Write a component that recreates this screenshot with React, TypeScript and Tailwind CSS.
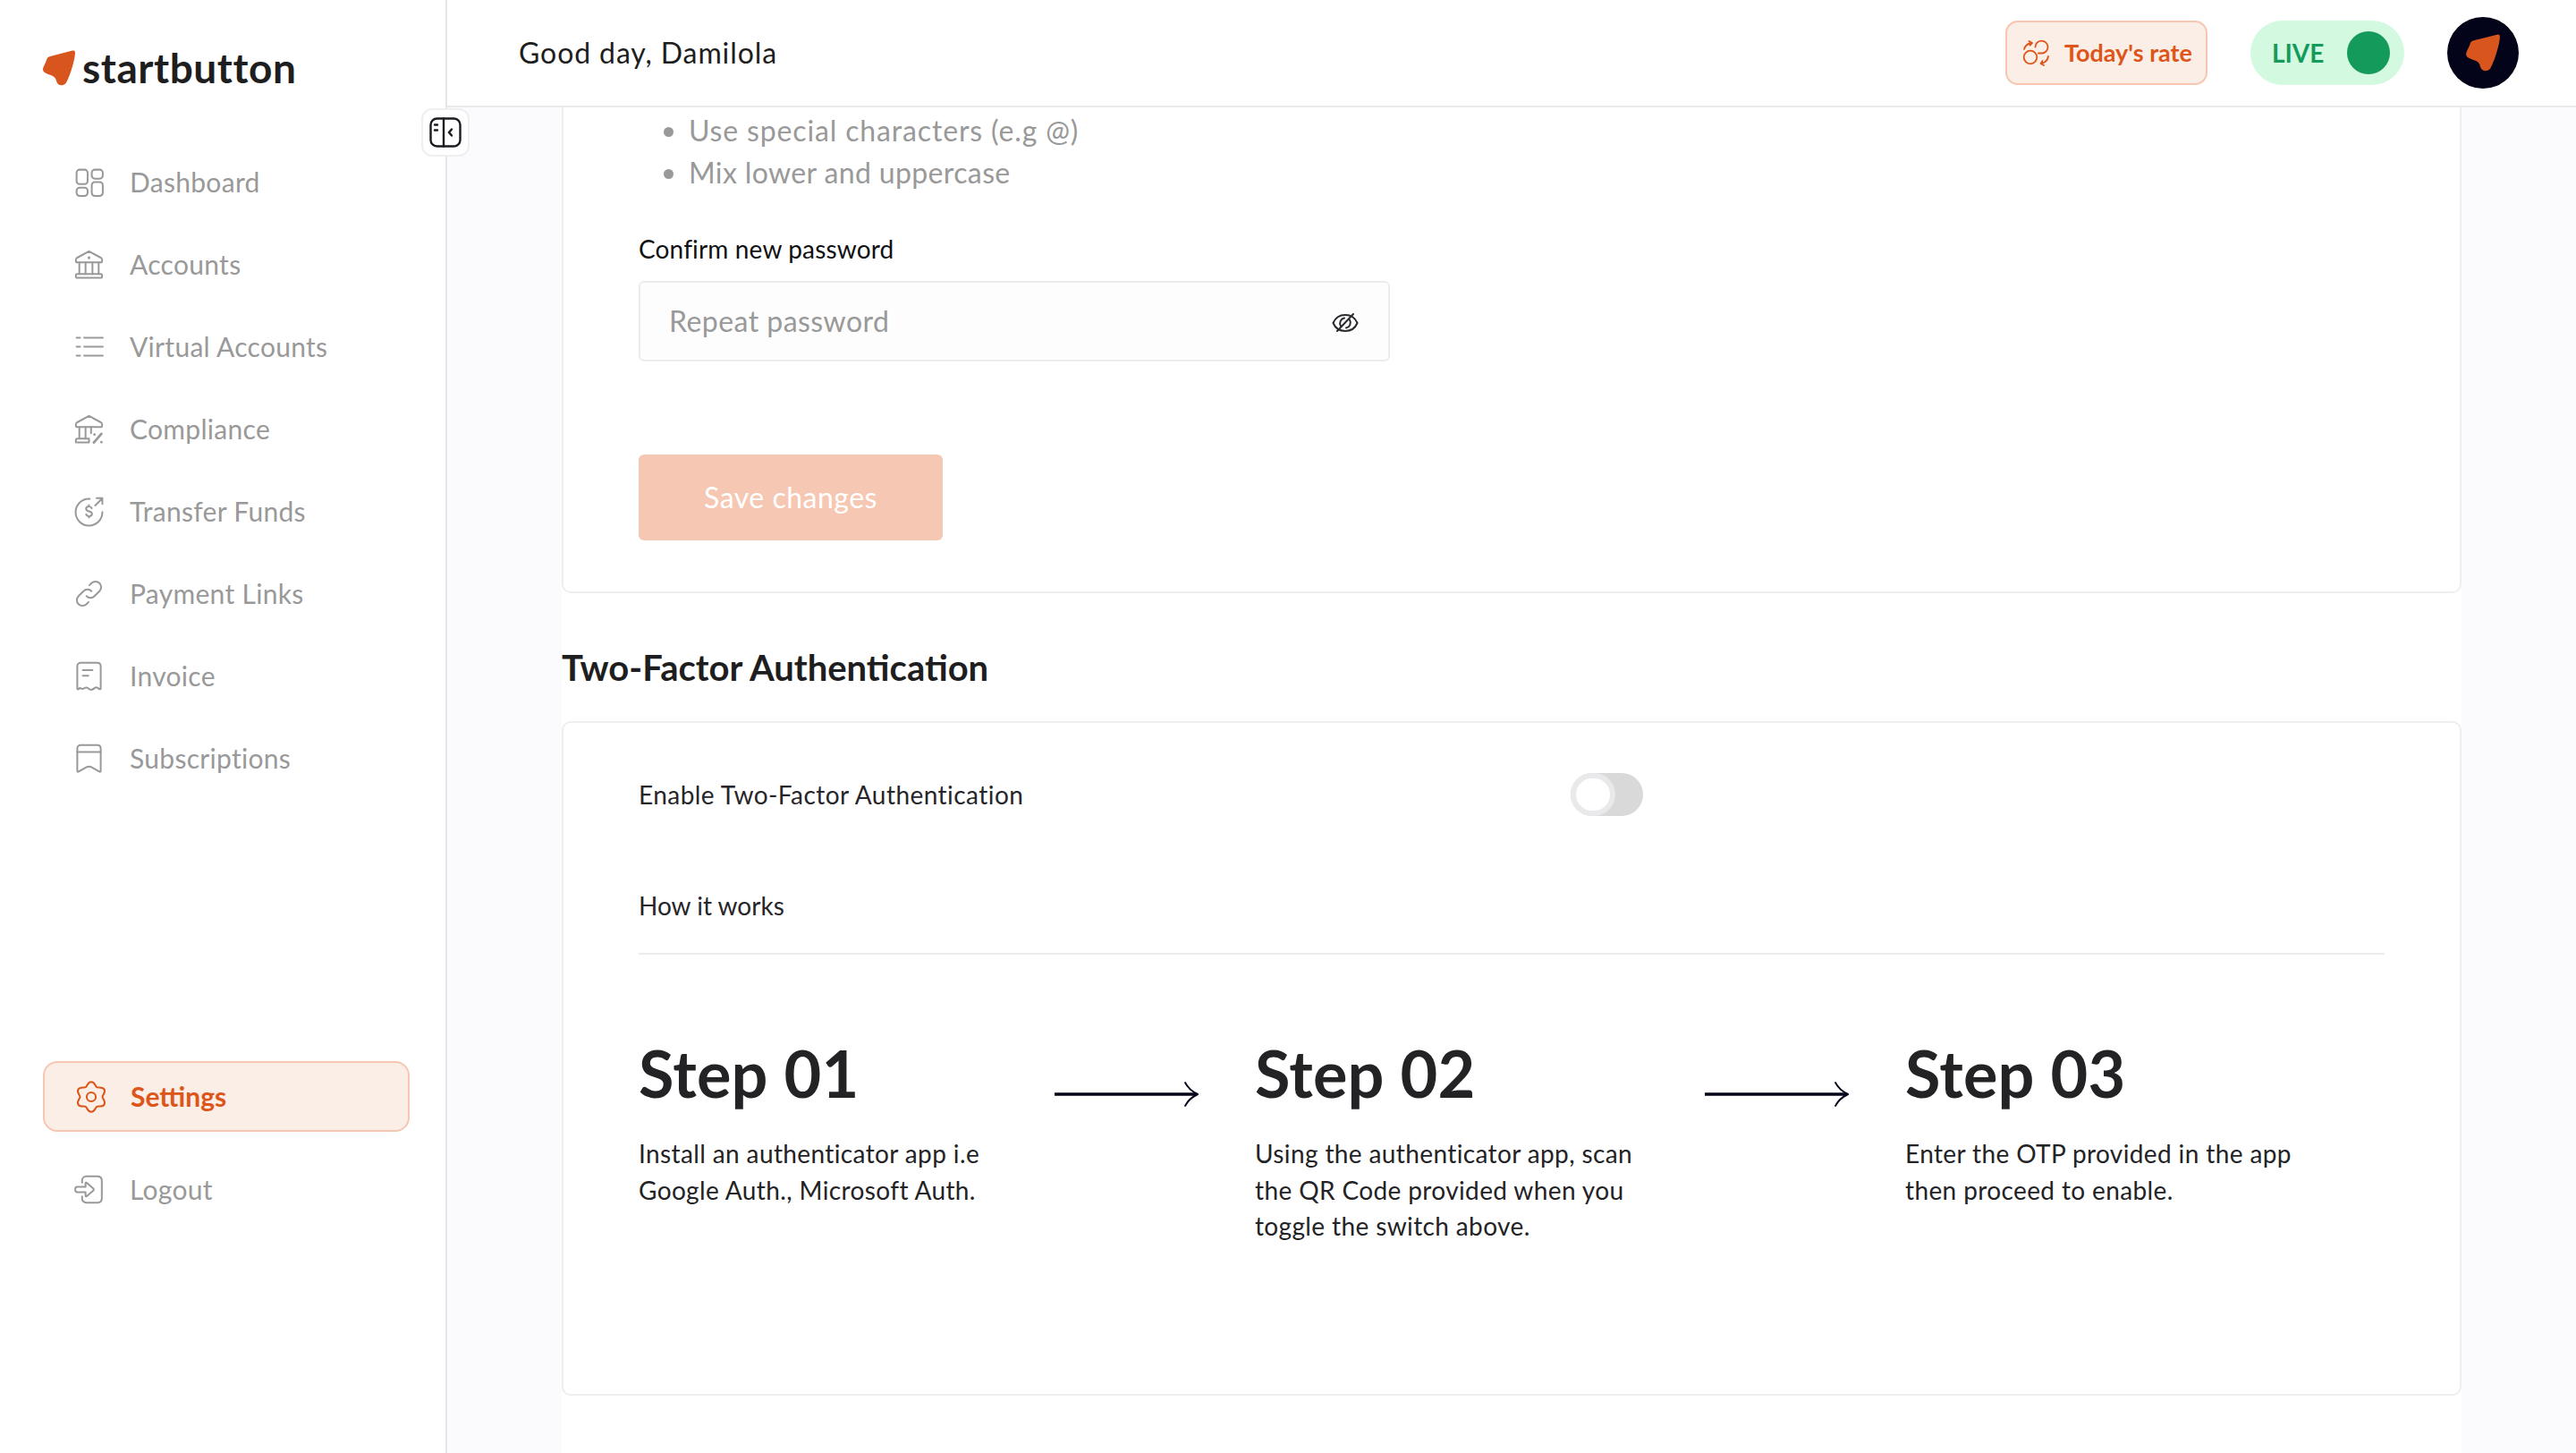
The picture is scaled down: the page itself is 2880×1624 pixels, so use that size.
import React from 'react';

const StartLogo = ({ className }: { className: string }) => (
  <svg viewBox="0 0 36 40" className={className}>
    <path
      d="M33 .6C35.4 0 36 1 36 3.4 35.6 11 31 27 26 36.4 23.500 40 17.500 40.500 15.600 36 14.500 32.600 14 30 10 28.400 5.500 26.600 0 25.500 0 21.400 .2 18.500 3.200 14.500 4.600 9.500 5.400 7.400 7.500 7 10 6.400Z"
      fill="#D8561E"
    />
  </svg>
);

// six lobed gear outline, lobes at top and bottom
function gearPath() {
  const pt = (deg: number, r: number, side = 0, len = 0) => {
    const a = (deg * Math.PI) / 180;
    const x = 12 + r * Math.cos(a) - side * len * Math.sin(a);
    const y = 12 + r * Math.sin(a) + side * len * Math.cos(a);
    return `${x.toFixed(2)} ${y.toFixed(2)}`;
  };
  let d = `M${pt(-90, 10.6)}`;
  for (let i = 0; i < 12; i++) {
    const from = -90 + i * 30;
    const to = from + 30;
    const fromLobe = i % 2 === 0;
    const rFrom = fromLobe ? 10.6 : 7.9;
    const rTo = fromLobe ? 7.9 : 10.6;
    const lenFrom = fromLobe ? 2.6 : 1.3;
    const lenTo = fromLobe ? 1.3 : 2.6;
    d += `C${pt(from, rFrom, 1, lenFrom)} ${pt(to, rTo, -1, lenTo)} ${pt(to, rTo)}`;
  }
  return d + 'Z';
}

const icons: Record<string, React.ReactNode> = {
  dashboard: (
    <>
      <rect x="3" y="3" width="8" height="10.500" rx="2.200" />
      <rect x="14" y="3" width="8" height="6.500" rx="2.200" />
      <rect x="3" y="16" width="8" height="6" rx="2.200" />
      <rect x="14" y="12" width="8" height="10" rx="2.200" />
    </>
  ),
  bank: (
    <>
      <path d="M12 2.500 20.800 7.300c.5.300.7.700.7 1.200v1c0 .6-.4 1-1 1H3.500c-.6 0-1-.4-1-1v-1c0-.5.2-.9.7-1.200Z" />
      <path d="M5 10.500V19M9.500 10.500V19M14.500 10.500V19M19 10.500V19" />
      <rect x="2.500" y="19" width="19" height="2.800" rx="1" />
      <path d="M12 7.200h.01" strokeWidth="2" />
    </>
  ),
  list: <path d="M8.500 5.500H22M8.500 12H22M8.500 18.500H22M3 5.500h2.500M3 12h2.500M3 18.500h2.500" />,
  compliance: (
    <>
      <path d="M12 2.500 20.800 7.300c.5.300.7.700.7 1.200v1c0 .6-.4 1-1 1H3.500c-.6 0-1-.4-1-1v-1c0-.5.2-.9.7-1.200Z" />
      <path d="M5 10.500V19M9.500 10.500V19M13.500 10.500V15" />
      <path d="M2.500 21.800V20c0-.6.400-1 1-1h8.500v2.800H3.500" />
      <path d="M21 15.500l-5.500 6.300M16 16h.01M21 21.500h.01" strokeWidth="1.800" />
    </>
  ),
  transfer: (
    <>
      <path d="M12.500 3A9.700 9.700 0 1 0 21.700 12.500" />
      <path d="M16.500 7.800 21.500 2.800M17.500 2.500h4.200v4.200" />
      <path d="M14 9.800c-.3-.8-1-1.300-2-1.300-1.200 0-2.100.7-2.100 1.700s.8 1.500 2.100 1.800 2.200.8 2.200 1.800-.9 1.700-2.200 1.700c-1 0-1.800-.5-2.100-1.300M12 7.500v1M12 15.500v1" />
    </>
  ),
  link: (
    <>
      <path d="M10.200 13.800a4 4 0 0 0 5.800 0l3.600-3.600a4.100 4.100 0 0 0-5.800-5.800l-1.500 1.500" />
      <path d="M13.800 10.200a4 4 0 0 0-5.800 0l-3.600 3.600a4.100 4.100 0 0 0 5.800 5.800l1.500-1.500" />
    </>
  ),
  invoice: (
    <>
      <path d="M3.500 5c0-1.400 1-2.500 2.500-2.500h12c1.500 0 2.500 1.100 2.500 2.500v16c0 .6-.5.800-1 .5-1.500-1.200-2.300-1.500-3-1-1 .8-2 1.500-3 1.500-1.500 0-2-1.500-3.500-1.500S7.800 22 6.500 21.200C5.500 20.500 5 20.800 4.500 21.500c-.4.400-1 .2-1-.5Z" />
      <path d="M7.500 7.800h7M7.500 11.800h4" />
    </>
  ),
  bookmark: (
    <>
      <path d="M3.500 5c0-1.400 1-2.500 2.500-2.500h12c1.500 0 2.500 1.100 2.500 2.500v16.200c0 .6-.5.800-1 .5l-5.500-3.200c-1.500-.8-2.500-.8-4 0L4.500 21.700c-.5.300-1 .1-1-.5Z" />
      <path d="M3.500 7.500h17" />
    </>
  ),
  gear: (
    <>
      <circle cx="12" cy="12" r="3.200" />
      <path d={gearPath()} />
    </>
  ),
  logout: (
    <>
      <path d="M7 7V5.500c0-1.700 1.200-3 3-3h8c2 0 3.300 1.300 3.300 3.200v12.600c0 1.900-1.300 3.200-3.300 3.200h-8c-1.800 0-3-1.300-3-3V17" />
      <path d="M3.500 10h6V7.500c0-.5.5-.7.900-.4l4.800 4.300c.4.300.4.900 0 1.200l-4.800 4.300c-.4.300-.9.100-.9-.4V14h-6c-1 0-1.500-.9-1.500-2s.5-2 1.500-2Z" />
    </>
  ),
};

const NavIcon = ({ name, className }: { name: string; className: string }) => (
  <svg viewBox="0 0 24 24" fill="none" stroke="currentColor" strokeWidth="1.300" strokeLinecap="round" strokeLinejoin="round" className={className}>
    {icons[name]}
  </svg>
);

const menuItems = [
  { name: 'Dashboard', icon: 'dashboard' },
  { name: 'Accounts', icon: 'bank' },
  { name: 'Virtual Accounts', icon: 'list' },
  { name: 'Compliance', icon: 'compliance' },
  { name: 'Transfer Funds', icon: 'transfer' },
  { name: 'Payment Links', icon: 'link' },
  { name: 'Invoice', icon: 'invoice' },
  { name: 'Subscriptions', icon: 'bookmark' },
];

const steps = [
  { title: 'Step 01', lines: ['Install an authenticator app i.e', 'Google Auth., Microsoft Auth.'], width: 'w-[465px]' },
  { title: 'Step 02', lines: ['Using the authenticator app, scan', 'the QR Code provided when you', 'toggle the switch above.'], width: 'w-[503px]' },
  { title: 'Step 03', lines: ['Enter the OTP provided in the app', 'then proceed to enable.'], width: 'w-[500px]' },
];

function Sidebar() {
  return (
    <aside className="relative flex w-[500px] shrink-0 flex-col border-r-2 border-[#e6e6e6] bg-white">
      <div className="flex h-[157px] items-start gap-[8px] pl-[48px] pt-[56px]">
        <StartLogo className="h-[40px] w-[36px]" />
        <span className="mt-[-6px] text-[46px] font-bold leading-[52px] tracking-[0.55px] text-[#1e1e20]">startbutton</span>
      </div>

      {/* collapse toggle sits over the sidebar edge */}
      <button className="absolute left-[471px] top-[121px] flex h-[54px] w-[54px] items-center justify-center rounded-[12px] border-2 border-[#efeff1] bg-white">
        <svg viewBox="0 0 36 34" fill="none" stroke="#1b1b20" strokeWidth="2.400" strokeLinecap="round" className="h-[34px] w-[36px]">
          <rect x="1.500" y="1.500" width="33" height="31" rx="7" />
          <path d="M16 1.500v31M6 8.500h3M6 14.500h3M25 13.500l-3 3.500 3 3.500" />
        </svg>
      </button>

      <nav className="flex flex-col">
        {menuItems.map((item) => (
          <a key={item.name} className="flex h-[92px] items-center gap-[27px] pl-[81px] text-[30px] tracking-[0.3px] text-[#999999]">
            <NavIcon name={item.icon} className="h-[37px] w-[37px] shrink-0" />
            {item.name}
          </a>
        ))}
      </nav>

      <a className="ml-[48px] mt-[293px] flex h-[79px] w-[410px] items-center gap-[25px] rounded-[16px] border-2 border-[#f6c6b0] bg-[#fbeee6] pl-[33px] text-[30px] font-bold text-[#dd5519]">
        <NavIcon name="gear" className="h-[38px] w-[38px] shrink-0" />
        Settings
      </a>
      <a className="mt-[18px] flex h-[92px] items-center gap-[27px] pl-[81px] text-[30px] tracking-[0.3px] text-[#999999]">
        <NavIcon name="logout" className="h-[37px] w-[37px] shrink-0" />
        Logout
      </a>
    </aside>
  );
}

function Header() {
  return (
    <header className="flex h-[120px] shrink-0 items-center border-b-2 border-[#e9e9e9] bg-white pl-[80px] pr-[64px]">
      <span className="text-[32px] tracking-[0.9px] text-[#1e1e20]">Good day, Damilola</span>
      <div className="ml-auto flex items-center">
        <button className="flex h-[72px] w-[226px] items-center gap-[16px] rounded-[14px] border-2 border-[#f6c6b0] bg-[#fbeee6] pl-[17px] text-[27px] font-bold text-[#dd5519]">
          <svg viewBox="11 9 31 30" fill="none" stroke="currentColor" strokeWidth="1.800" strokeLinecap="round" strokeLinejoin="round" className="h-[30px] w-[31px]">
            <circle cx="20" cy="29" r="7.300" />
            <path d="M25.500 17.500A7 7 0 1 1 33.500 24.500H29" />
            <path d="M13 20A10 10 0 0 1 21.500 13M18.500 11 22 13 19.500 15.500M40 28A10 10 0 0 1 32 36M35 38 31.500 36 33.500 33" />
          </svg>
          Today's rate
        </button>
        <div className="ml-[48px] flex h-[72px] w-[172px] items-center justify-between rounded-full bg-[#d3fae1] pl-[24px] pr-[16px]">
          <span className="text-[28px] font-bold text-[#149a5b]">LIVE</span>
          <span className="h-[48px] w-[48px] rounded-full bg-[#149a5b]" />
        </div>
        <div className="ml-[48px] flex h-[80px] w-[80px] items-center justify-center rounded-full bg-[#03031a]">
          <StartLogo className="h-[42px] w-[38px]" />
        </div>
      </div>
    </header>
  );
}

function Arrow() {
  return (
    <svg viewBox="0 0 162 28" fill="none" stroke="#03031a" strokeLinecap="round" className="mt-[54px] h-[28px] w-[161px] shrink-0">
      <path d="M0 14h160" strokeWidth="3.500" strokeLinecap="butt" />
      <path d="M147 1c3 6 8 10 14 13-6 3-11 7-14 13" strokeWidth="2" />
    </svg>
  );
}

export default function App() {
  return (
    <div className="flex h-[1624px] w-[2880px] overflow-hidden bg-[#fbfbfe] font-[Lato,sans-serif]">
      <Sidebar />
      <div className="flex min-w-0 flex-1 flex-col">
        <Header />
        <main className="flex-1 overflow-hidden pl-[128px] pr-[128px]">
          <div className="h-full bg-white">
            {/* password card, scrolled so that its top is cut off */}
            <section className="h-[543px] rounded-b-[10px] border-2 border-t-0 border-[#eeeef0] bg-white pl-[84px]">
              <ul className="list-disc pl-[56px] pt-[2px] text-[32px] leading-[47px] text-[#999999]">
                <li className="tracking-[0.85px]">Use special characters (e.g @)</li>
                <li className="tracking-[0.37px]">Mix lower and uppercase</li>
              </ul>
              <label className="mt-[44px] block text-[28px] leading-[36px] tracking-[0.15px] text-[#111114]">Confirm new password</label>
              <div className="mt-[18px] flex h-[90px] w-[840px] items-center rounded-[6px] border-2 border-[#ececee] bg-[#fdfdfd] pl-[32px] pr-[32px]">
                <input placeholder="Repeat password" className="min-w-0 flex-1 bg-transparent text-[32px] tracking-[0.45px] outline-none placeholder:text-[#999999]" />
                <svg viewBox="18 11 32 24" fill="none" stroke="#2a2a2e" strokeWidth="2" strokeLinecap="round" className="mt-[4px] h-[24px] w-[32px]">
                  <path d="M20.500 23C23 17 28 14 34 14s11 3 13.500 9C45 29 40 32 34 32s-11-3-13.500-9Z" />
                  <path d="M29 26.500A6 6 0 0 1 33 17.500M39 19.500A6 6 0 0 1 35 28.500M25 32 43 13" />
                </svg>
              </div>
              <button className="mt-[104px] h-[96px] w-[340px] rounded-[6px] bg-[#f6c7b2] text-[32px] tracking-[0.5px] text-white">Save changes</button>
            </section>

            <h2 className="mt-[57px] text-[40px] font-bold leading-[52px] text-[#1e1e20]">Two-Factor Authentication</h2>

            <section className="mt-[34px] h-[754px] rounded-[10px] border-2 border-[#eeeef0] bg-white pl-[84px] pr-[84px] pt-[56px]">
              <div className="flex h-[48px] items-center">
                <span className="w-[1042px] text-[28px] tracking-[0.45px] text-[#26262a]">Enable Two-Factor Authentication</span>
                <span className="flex h-[48px] w-[81px] items-center rounded-full bg-[#d9d9d9]">
                  <span className="h-[48px] w-[50px] rounded-full border-[6px] border-[#e9e9eb] bg-white" />
                </span>
              </div>
              <div className="mt-[82px] border-b-2 border-[#ececee] pb-[35px] text-[28px] leading-[36px] text-[#26262a]">How it works</div>
              <div className="mt-[88px] flex">
                {steps.map((step, i) => (
                  <React.Fragment key={step.title}>
                    <div className={`${step.width} shrink-0`}>
                      <h3 className="text-[72px] font-bold leading-[88px] tracking-[0.25px] text-[#232326]">{step.title}</h3>
                      <p className="mt-[26px] text-[28px] leading-[40.500px] tracking-[0.38px] text-[#232326]">
                        {step.lines.map((line) => (
                          <span key={line} className="block">{line}</span>
                        ))}
                      </p>
                    </div>
                    {i < 2 && (
                      <div className="mr-[63px] shrink-0">
                        <Arrow />
                      </div>
                    )}
                  </React.Fragment>
                ))}
              </div>
            </section>
          </div>
        </main>
      </div>
    </div>
  );
}
